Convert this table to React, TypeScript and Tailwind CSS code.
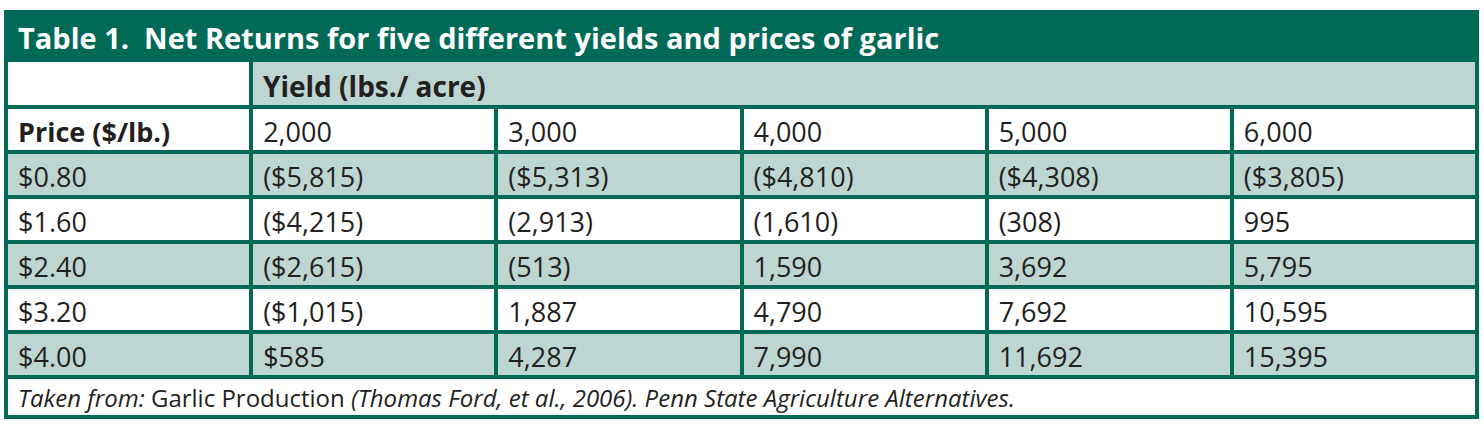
const font = { fontFamily: '"Open Sans", "Noto Sans", sans-serif' };

const yields = ["2,000", "3,000", "4,000", "5,000", "6,000"];

const rows: { price: string; values: string[] }[] = [
  { price: "$0.80", values: ["($5,815)", "($5,313)", "($4,810)", "($4,308)", "($3,805)"] },
  { price: "$1.60", values: ["($4,215)", "(2,913)", "(1,610)", "(308)", "995"] },
  { price: "$2.40", values: ["($2,615)", "(513)", "1,590", "3,692", "5,795"] },
  { price: "$3.20", values: ["($1,015)", "1,887", "4,790", "7,692", "10,595"] },
  { price: "$4.00", values: ["$585", "4,287", "7,990", "11,692", "15,395"] },
];

function Cell({ children, shaded, bold }: { children?: React.ReactNode; shaded?: boolean; bold?: boolean }) {
  return (
    <div
      className={`flex items-center pl-[10px] pt-[4px] text-[27px] leading-none text-[#231f20] ${
        shaded ? "bg-[#bdd6d1]" : "bg-white"
      } ${bold ? "font-bold" : ""}`}
    >
      {children}
    </div>
  );
}

export default function App() {
  return (
    <div className="min-h-[427px] bg-white pl-[4px] pt-[10px]" style={font}>
      <div className="w-[1475px] bg-[#006a57] px-[4px] pb-[4px]">
        <div className="flex h-[52px] items-center px-[10px] pt-[2px] text-[29px] leading-none font-bold text-white">
          Table 1.&nbsp; Net Returns for five different yields and prices of garlic
        </div>
        <div className="grid grid-cols-[241px_1fr] gap-[4px]">
          <div className="h-[43px] bg-white" />
          <div className="flex items-center bg-[#bdd6d1] pl-[10px] pt-[4px] text-[28px] leading-none font-bold text-[#231f20]">
            Yield (lbs./ acre)
          </div>
        </div>
        <div className="mt-[4px] grid grid-cols-[repeat(6,1fr)] auto-rows-[41px] gap-[4px]">
          <Cell bold>Price ($/lb.)</Cell>
          {yields.map((y) => (
            <Cell key={y}>{y}</Cell>
          ))}
          {rows.map((r, i) => (
            <>
              <Cell key={r.price} shaded={i % 2 === 0}>
                {r.price}
              </Cell>
              {r.values.map((v, j) => (
                <Cell key={r.price + j} shaded={i % 2 === 0}>
                  {v}
                </Cell>
              ))}
            </>
          ))}
        </div>
        <div className="mt-[4px] flex h-[36px] items-center bg-white pl-[10px] pt-[2px] text-[24px] leading-none text-[#231f20]">
          <span className="italic">Taken from:</span>
          <span>&nbsp;Garlic Production&nbsp;</span>
          <span className="italic">(Thomas Ford, et al., 2006). Penn State Agriculture Alternatives.</span>
        </div>
      </div>
    </div>
  );
}
